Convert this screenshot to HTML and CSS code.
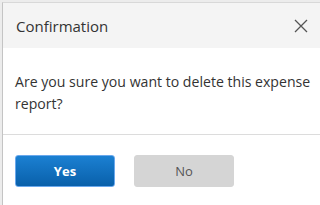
FILE: index.html
```html
<!DOCTYPE html>
<html>
<head>
<meta charset="utf-8">
<link rel="stylesheet" href="styles.css">
</head>
<body>
<div class="dialog">
  <div class="header">
    <span class="title">Confirmation</span>
    <svg class="close" width="14" height="14" viewBox="0 0 14 14"><path d="M1 1L13 13M13 1L1 13" stroke="#555" stroke-width="1.3" fill="none"/></svg>
  </div>
  <div class="body">Are you sure you want to delete this expense report?</div>
  <div class="footer">
    <button class="btn yes">Yes</button>
    <button class="btn no">No</button>
  </div>
</div>
</body>
</html>
```
FILE: styles.css
```css
html, body {
  margin: 0;
  padding: 0;
  background: #ececec;
  width: 320px;
  height: 205px;
  overflow: hidden;
}
body {
  padding: 2px 0 0 2px;
  box-sizing: border-box;
  font-family: "Open Sans", sans-serif;
}
.dialog {
  background: #fff;
  border-left: 1px solid #c4c4c4;
  border-top: 1px solid #d8d8d8;
  height: 210px;
}
.header {
  background: #f4f4f4;
  height: 45px;
  display: flex;
  align-items: center;
  justify-content: space-between;
  padding: 0 12px 0 13px;
}
.title {
  font-size: 15px;
  color: #333;
  margin-top: 1px;
}
.close {
  margin-top: 0;
}
.body {
  padding: 23px 2px 19px 12px;
  font-size: 14.1px;
  line-height: 22px;
  color: #333;
  border-bottom: 1px solid #dcdcdc;
}
.footer {
  display: flex;
  gap: 19px;
  padding: 20px 12px;
}
.btn {
  width: 100px;
  height: 32px;
  border-radius: 3px;
  font-family: "Open Sans", sans-serif;
  font-size: 13px;
  padding: 0;
}
.yes {
  background: linear-gradient(#1b80d2, #0960aa);
  border: 1px solid #6aa8ec;
  color: #fff;
  font-weight: bold;
}
.no {
  background: #d5d5d5;
  border: 1px solid #d5d5d5;
  color: #555;
}
```
